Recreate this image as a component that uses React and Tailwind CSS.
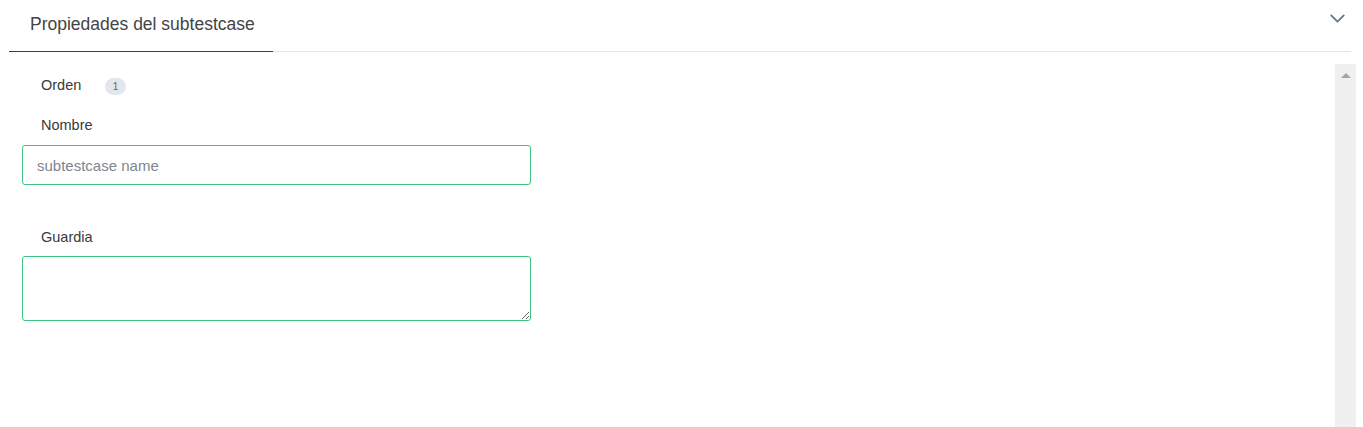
import { ChevronDown } from 'lucide-react'

export default function App() {
  return (
    <div className="w-[1363px] h-[427px] bg-white overflow-hidden font-['Liberation_Sans',Arial,sans-serif]">
      {/* Header / tab */}
      <div className="flex items-start pl-[9px] pr-[13px]">
        <div className="flex-1 flex border-b border-[#e6e6e6]">
          <div className="w-[264px] h-[52px] pl-[21px] pt-[13px] border-b border-[#8b1c1c] -mb-px">
            <span className="text-[17.5px] leading-[20px] text-[#444]">Propiedades del subtestcase</span>
          </div>
        </div>
        <ChevronDown size={25} strokeWidth={1.8} className="text-[#6b7785] mt-[6px] -ml-[26px]" />
      </div>

      {/* Body */}
      <div className="flex">
        <div className="flex-1 pl-[22px] pt-[25px]">
          <div className="flex items-center pl-[19px] h-[18px]">
            <span className="text-[14.5px] text-[#3a3a3a] w-[64px]">Orden</span>
            <span className="w-[21px] h-[17px] rounded-full bg-[#e3e7eb] text-[10px] text-[#666] flex items-center justify-center">1</span>
          </div>
          <div className="pl-[19px] mt-[22px] text-[14.5px] text-[#3a3a3a] leading-[16px]">Nombre</div>
          <input
            placeholder="subtestcase name"
            className="mt-[12px] w-[509px] h-[40px] px-[14px] border border-[#3fc380] rounded-[3px] text-[15px] text-[#333] placeholder:text-[#7d8690] outline-none"
          />
          <div className="pl-[19px] mt-[44px] text-[14.5px] text-[#3a3a3a] leading-[16px]">Guardia</div>
          <textarea
            className="block mt-[11px] w-[509px] h-[65px] border border-[#3fc380] rounded-[3px] outline-none"
          />
        </div>
        <div className="w-[21px] h-[375px] mt-[12px] mr-[7px] bg-[#f0f0f0] flex justify-center pt-[9px]">
          <div className="w-0 h-0 border-l-[5px] border-r-[5px] border-b-[5px] border-l-transparent border-r-transparent border-b-[#a3a3a3]" />
        </div>
      </div>
    </div>
  )
}
